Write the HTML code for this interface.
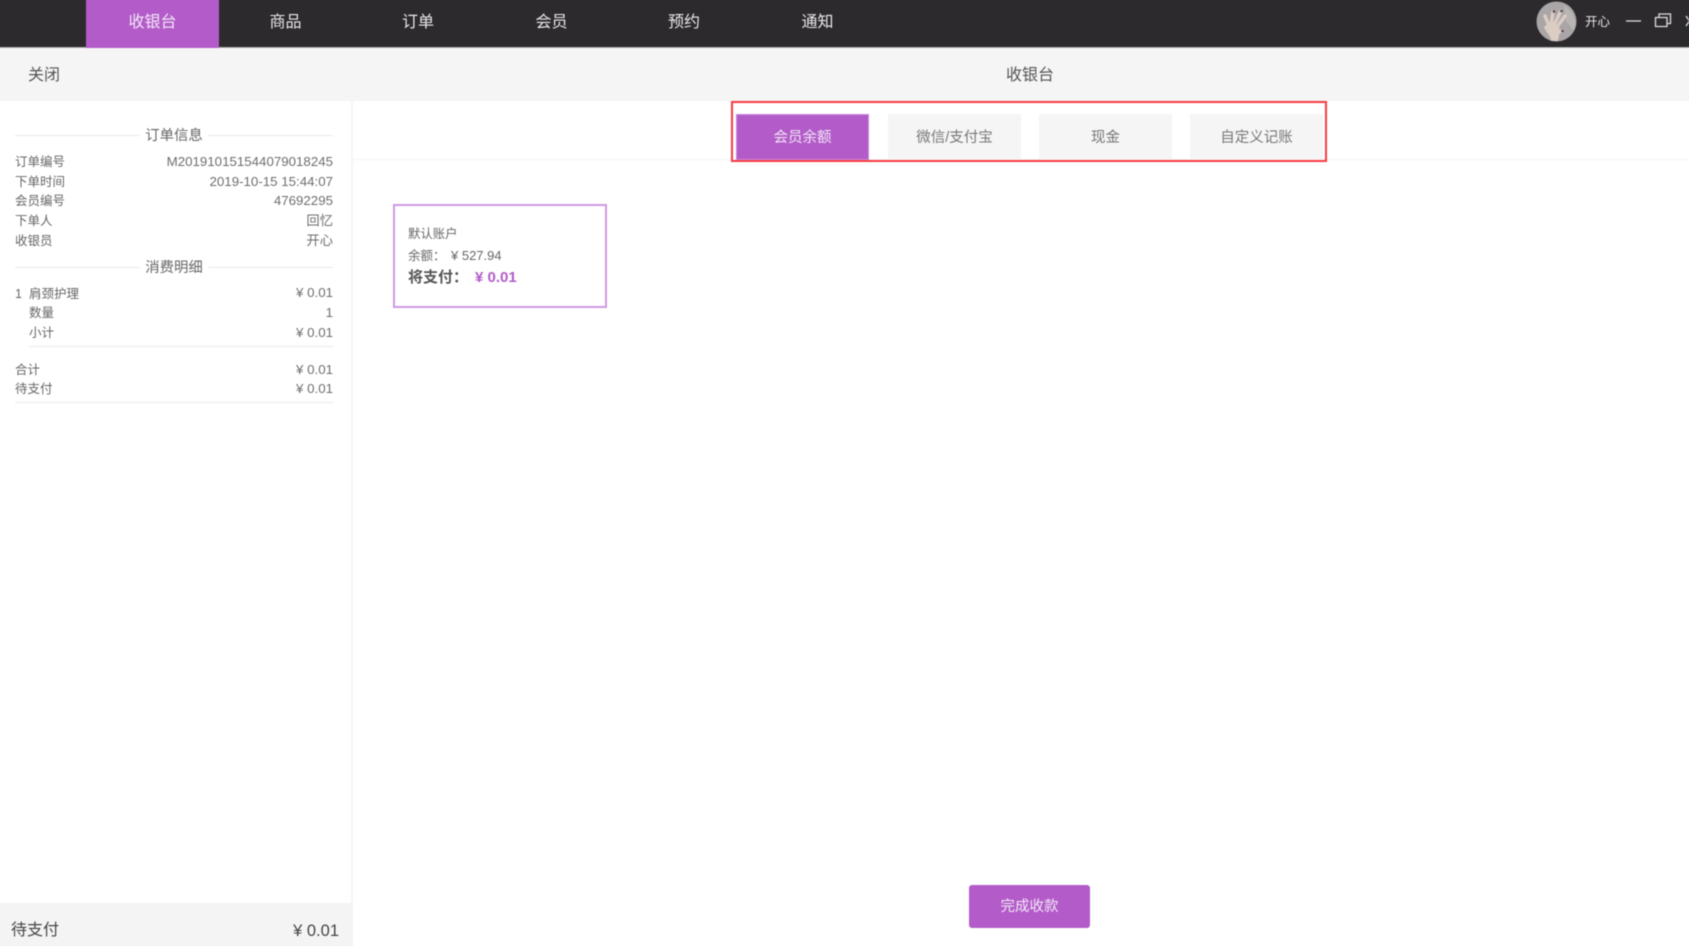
<!DOCTYPE html>
<html lang="zh"><head><meta charset="utf-8"><title>收银台</title>
<style>
html,body{margin:0;padding:0;background:#fff;overflow:hidden;width:1689px;height:946px}
#o{position:absolute;left:0;top:0;width:1689px;height:946px;overflow:hidden}
#p{position:absolute;left:0;top:0;width:1689px;height:946px;background:#fff;font-family:"Liberation Sans","Noto Sans CJK SC",sans-serif;color:#666;filter:blur(.4px)}
#p div{position:absolute;box-sizing:border-box}
.t{white-space:nowrap;line-height:20px;height:20px}
.c{transform:translateX(-50%)}
.r{text-align:right;right:1356px}
.n{top:12.5px;font-size:16px;color:#e9e9e9}
.l{left:15px;font-size:12.5px;color:#666}
.v{font-size:13.3px;color:#6e6e6e}
.tab{top:114px;height:46px;width:133px;background:#f5f5f5;text-align:center;font-size:14.5px;line-height:49px;color:#777}
.hr{height:1px;background:#eaeaea}
</style></head><body><div id="o"><div id="p">
<div style="left:-10px;top:-10px;width:1710px;height:57px;background:#2d2a2e"></div>
<div style="left:-10px;top:47px;width:1710px;height:1px;background:#b0b0b0"></div>
<div style="left:86px;top:-10px;width:133px;height:58px;background:#b35cc9"></div>
<div class="t c n" style="left:152.5px;color:#f3e6f7">收银台</div>
<div class="t c n" style="left:285.5px">商品</div>
<div class="t c n" style="left:418px">订单</div>
<div class="t c n" style="left:551.5px">会员</div>
<div class="t c n" style="left:684px">预约</div>
<div class="t c n" style="left:817.5px">通知</div>
<svg style="position:absolute;left:1536px;top:1px" width="41" height="41" viewBox="0 0 41 41"><circle cx="20.5" cy="20.5" r="20" fill="#aaa6a7"/><path d="M28 5A20 20 0 0 1 38 30L30 20Z" fill="#b9b5b5"/><g stroke="#dccdc4" stroke-width="3.4" stroke-linecap="round" fill="none"><path d="M14 27L9 15"/><path d="M15 24L17 11"/><path d="M18 24L25 10"/><path d="M21 26L29 15"/><path d="M22 31L26 30"/></g><path d="M8 26C11 22 20 21 23 26C25 31 22 36 22 40L15 40C15 34 10 32 8 26Z" fill="#dccdc4"/><circle cx="25.5" cy="10" r="1.3" fill="#5b4048"/><circle cx="18" cy="10.5" r="1.3" fill="#5b4048"/><circle cx="26.5" cy="30" r="1.3" fill="#5b4048"/></svg>
<div class="t" style="left:1585px;top:12px;font-size:12.5px;color:#e6e6e6">开心</div>
<svg style="position:absolute;left:1620px;top:8px" width="69" height="26" viewBox="0 0 69 26"><path d="M6 13H21" stroke="#ddd" stroke-width="1.3" fill="none"/><path d="M35.5 9.5H47V18.5H35.5ZM39 9.5V6H50.5V15.5H47" stroke="#ddd" stroke-width="1.3" fill="none"/><path d="M66 8L73 18M66 18L73 8" stroke="#ddd" stroke-width="1.3" fill="none"/></svg>

<div style="left:-10px;top:48px;width:1710px;height:53px;background:#f5f5f5"></div>
<div class="t" style="left:28px;top:66px;font-size:16px;color:#555">关闭</div>
<div class="t c" style="left:1030px;top:66px;font-size:16px;color:#555">收银台</div>

<div style="left:351px;top:101px;width:2px;height:802px;background:#f5f5f5"></div>

<div class="hr" style="left:15px;top:135px;width:125px"></div>
<div class="hr" style="left:208px;top:135px;width:125px"></div>
<div class="t c" style="left:174px;top:126px;font-size:14.4px;color:#666">订单信息</div>
<div class="t l" style="top:152px">订单编号</div><div class="t v r" style="top:151.5px">M201910151544079018245</div>
<div class="t l" style="top:171.5px">下单时间</div><div class="t v r" style="top:171.5px">2019-10-15 15:44:07</div>
<div class="t l" style="top:191px">会员编号</div><div class="t v r" style="top:190.5px">47692295</div>
<div class="t l" style="top:210.5px">下单人</div><div class="t v r" style="top:210.5px">回忆</div>
<div class="t l" style="top:230.5px">收银员</div><div class="t v r" style="top:230.5px">开心</div>
<div class="hr" style="left:15px;top:267px;width:125px"></div>
<div class="hr" style="left:208px;top:267px;width:125px"></div>
<div class="t c" style="left:174px;top:258px;font-size:14.4px;color:#666">消费明细</div>
<div class="t l" style="top:283.5px">1</div><div class="t l" style="left:29px;top:283.5px">肩颈护理</div><div class="t v r" style="top:283px">¥ 0.01</div>
<div class="t l" style="left:29px;top:303px">数量</div><div class="t v r" style="top:302.5px">1</div>
<div class="t l" style="left:29px;top:322.5px">小计</div><div class="t v r" style="top:322.5px">¥ 0.01</div>
<div class="hr" style="left:29px;top:346px;width:304px"></div>
<div class="t l" style="top:359.5px">合计</div><div class="t v r" style="top:359.5px">¥ 0.01</div>
<div class="t l" style="top:378.5px">待支付</div><div class="t v r" style="top:378.5px">¥ 0.01</div>
<div class="hr" style="left:15px;top:402px;width:318px"></div>

<div style="left:-10px;top:903px;width:363px;height:53px;background:#f4f4f4"></div>
<div class="t" style="left:11px;top:920.5px;font-size:16px;color:#444">待支付</div>
<div class="t" style="right:1350px;top:920.5px;font-size:16.5px;color:#444">¥ 0.01</div>

<div style="left:353px;top:159px;width:1346px;height:1px;background:#f3f3f3"></div>
<div class="tab" style="left:736px;background:#b35cc9;color:#f3e6f7;border:1px solid #c88adb;line-height:47px">会员余额</div>
<div class="tab" style="left:888px">微信/支付宝</div>
<div class="tab" style="left:1039px">现金</div>
<div class="tab" style="left:1190px">自定义记账</div>
<div style="left:731px;top:101px;width:596px;height:61px;border:2px solid #f73c43"></div>

<div style="left:393px;top:204px;width:214px;height:104px;border:2px solid #d09ae2"></div>
<div class="t" style="left:408px;top:224px;font-size:12.4px;color:#666">默认账户</div>
<div class="t" style="left:408px;top:245.5px;font-size:12.5px;color:#666">余额：</div>
<div class="t" style="left:451px;top:245.5px;font-size:13px;color:#666">¥ 527.94</div>
<div class="t" style="left:408px;top:267.5px;font-size:15px;font-weight:bold;color:#555">将支付：</div>
<div class="t" style="left:475px;top:267.5px;font-size:15px;font-weight:bold;color:#b35cc9">¥ 0.01</div>

<div style="left:969px;top:885px;width:121px;height:43px;background:#b35cc9;border-radius:3px;text-align:center;line-height:45px;font-size:14.5px;color:#f3e6f7">完成收款</div>
</div></div></body></html>
